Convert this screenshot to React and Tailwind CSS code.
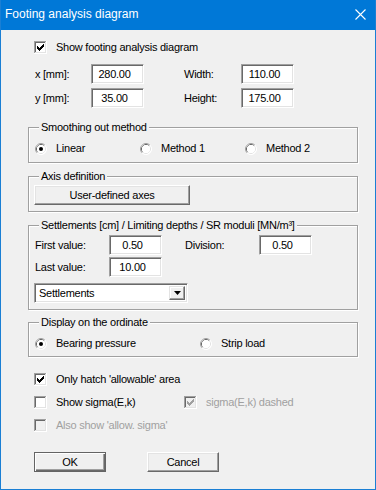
import React from "react";

const TICK = [
  [0, 2], [1, 3], [2, 4], [3, 3], [4, 2], [5, 1], [6, 0],
];

const CheckBox = ({ checked, disabled }) => {
  return (
    <svg width="13" height="13" viewBox="0 0 13 13" shapeRendering="crispEdges" className="shrink-0">
      <rect x="0" y="0" width="13" height="13" fill="#ffffff" />
      <rect x="0" y="0" width="12" height="12" fill="#a0a0a0" />
      <rect x="1" y="1" width="11" height="11" fill="#e3e3e3" />
      <rect x="1" y="1" width="10" height="10" fill="#696969" />
      <rect x="2" y="2" width="9" height="9" fill={disabled ? "#f0f0f0" : "#ffffff"} />
      {checked &&
        TICK.map(([x, y]) => (
          <rect key={x} x={3 + x} y={3 + y} width="1" height="3" fill={disabled ? "#a0a0a0" : "#000000"} />
        ))}
    </svg>
  );
};

const Radio = ({ checked }) => {
  return (
    <svg width="12" height="12" viewBox="0 0 12 12" className="shrink-0">
      <circle cx="6" cy="6" r="5.5" fill="#ffffff" />
      <path d="M2.11 9.89 A5.5 5.5 0 0 1 9.89 2.11" stroke="#a0a0a0" strokeWidth="1" fill="none" />
      <path d="M9.89 2.11 A5.5 5.5 0 0 1 2.11 9.89" stroke="#ffffff" strokeWidth="1" fill="none" />
      <path d="M2.82 9.18 A4.5 4.5 0 0 1 9.18 2.82" stroke="#696969" strokeWidth="1" fill="none" />
      <path d="M9.18 2.82 A4.5 4.5 0 0 1 2.82 9.18" stroke="#e3e3e3" strokeWidth="1" fill="none" />
      <circle cx="6" cy="6" r="4" fill="#ffffff" />
      {checked && <circle cx="6" cy="6" r="2" fill="#000000" />}
    </svg>
  );
};

const Field = ({ value }) => (
  <div className="w-[53px] h-[20px] bg-white border border-t-[#a0a0a0] border-l-[#a0a0a0] border-r-white border-b-white shadow-[inset_1px_1px_0_#696969,inset_-1px_-1px_0_#e3e3e3] flex items-center justify-center pr-[6px]">
    {value}
  </div>
);

const Group = ({ title, className, children }) => (
  <fieldset
    className={
      "ml-[27px] w-[330px] border border-[#a0a0a0] shadow-[1px_1px_0_#ffffff,inset_1px_1px_0_#ffffff] " +
      className
    }
  >
    <legend className="ml-[10px] px-[2px] h-[14px] leading-[14px] bg-[#f0f0f0]">{title}</legend>
    {children}
  </fieldset>
);

const Option = ({ checked, label }) => (
  <div className="flex items-center gap-[9px] h-[13px]">
    <Radio checked={checked} />
    <span>{label}</span>
  </div>
);

const CheckRow = ({ checked, disabled, label }) => (
  <div className={"flex items-center gap-[9px] h-[13px] " + (disabled ? "text-[#a0a0a0]" : "")}>
    <CheckBox checked={checked} disabled={disabled} />
    <span>{label}</span>
  </div>
);

export default function App() {
  return (
    <div className="w-[376px] h-[490px] flex flex-col bg-[#1a7fd4] px-[1px] pb-[1px] font-['Liberation_Sans',Arial,sans-serif] text-[11px] tracking-[-0.25px] text-black">
      <div className="h-[30px] shrink-0 bg-[#0078d7] flex items-center justify-between pl-[4px] pr-[9px] pb-[2px] text-white">
        <span className="text-[12px] tracking-normal">Footing analysis diagram</span>
        <svg width="11" height="11" viewBox="0 0 11 11" className="mt-[1px]">
          <path d="M0.5 0.5 L10.5 10.5 M10.5 0.5 L0.5 10.5" stroke="#ffffff" strokeWidth="1.1" />
        </svg>
      </div>

      <div className="flex-1 bg-[#f0f0f0] flex flex-col">
        <div className="mt-[11px] ml-[33px]">
          <CheckRow checked label="Show footing analysis diagram" />
        </div>

        <div className="mt-[10px] ml-[34px] flex flex-col gap-[4px]">
          <div className="flex items-center h-[20px]">
            <span className="w-[56px]">x [mm]:</span>
            <Field value="280.00" />
            <span className="ml-[40px] w-[57px]">Width:</span>
            <Field value="110.00" />
          </div>
          <div className="flex items-center h-[20px]">
            <span className="w-[56px]">y [mm]:</span>
            <Field value="35.00" />
            <span className="ml-[40px] w-[57px]">Height:</span>
            <Field value="175.00" />
          </div>
        </div>

        <Group title="Smoothing out method" className="mt-[12px] h-[43px]">
          <div className="mt-[8px] ml-[6px] grid grid-cols-[105px_105px_1fr]">
            <Option checked label="Linear" />
            <Option label="Method 1" />
            <Option label="Method 2" />
          </div>
        </Group>

        <Group title="Axis definition" className="mt-[6px] h-[43px]">
          <div className="mt-[2px] ml-[5px] w-[156px] h-[20px] flex items-center justify-center border border-t-white border-l-white border-r-[#696969] border-b-[#696969] shadow-[inset_-1px_-1px_0_#a0a0a0,inset_1px_1px_0_#e3e3e3]">
            User-defined axes
          </div>
        </Group>

        <Group title="Settlements [cm] / Limiting depths / SR moduli [MN/m³]" className="mt-[6px] h-[92px]">
          <div className="mt-[3px] ml-[6px] flex flex-col gap-[2px]">
            <div className="flex items-center h-[20px]">
              <span className="w-[74px]">First value:</span>
              <Field value="0.50" />
              <span className="ml-[23px] w-[74px]">Division:</span>
              <Field value="0.50" />
            </div>
            <div className="flex items-center h-[20px]">
              <span className="w-[74px]">Last value:</span>
              <Field value="10.00" />
            </div>
          </div>
          <div className="mt-[6px] ml-[5px] w-[154px] h-[20px] bg-white border border-t-[#a0a0a0] border-l-[#a0a0a0] border-r-white border-b-white shadow-[inset_1px_1px_0_#696969,inset_-1px_-1px_0_#e3e3e3] flex items-center justify-between p-[2px]">
            <span className="pl-[2px]">Settlements</span>
            <div className="w-[16px] h-full bg-[#f0f0f0] border border-t-[#e3e3e3] border-l-[#e3e3e3] border-r-[#696969] border-b-[#696969] shadow-[inset_-1px_-1px_0_#a0a0a0,inset_1px_1px_0_#ffffff] flex items-center justify-center">
              <svg width="7" height="4" viewBox="0 0 7 4">
                <path d="M0 0 H7 L3.5 4 Z" fill="#000000" />
              </svg>
            </div>
          </div>
        </Group>

        <Group title="Display on the ordinate" className="mt-[5px] h-[42px]">
          <div className="mt-[8px] ml-[6px] grid grid-cols-[165px_1fr]">
            <Option checked label="Bearing pressure" />
            <Option label="Strip load" />
          </div>
        </Group>

        <div className="mt-[16px] ml-[33px] flex flex-col gap-[10px]">
          <CheckRow checked label="Only hatch 'allowable' area" />
          <div className="grid grid-cols-[150px_1fr]">
            <CheckRow label="Show sigma(E,k)" />
            <CheckRow checked disabled label="sigma(E,k) dashed" />
          </div>
          <CheckRow disabled label="Also show 'allow. sigma'" />
        </div>

        <div className="mt-[20px] ml-[33px] flex gap-[41px]">
          <div className="w-[72px] h-[20px] flex items-center justify-center border border-[#646464] shadow-[inset_1px_1px_0_#ffffff,inset_-1px_-1px_0_#696969,inset_-2px_-2px_0_#a0a0a0]">
            OK
          </div>
          <div className="w-[72px] h-[20px] flex items-center justify-center border border-t-white border-l-white border-r-[#696969] border-b-[#696969] shadow-[inset_-1px_-1px_0_#a0a0a0,inset_1px_1px_0_#e3e3e3]">
            Cancel
          </div>
        </div>
      </div>
    </div>
  );
}
